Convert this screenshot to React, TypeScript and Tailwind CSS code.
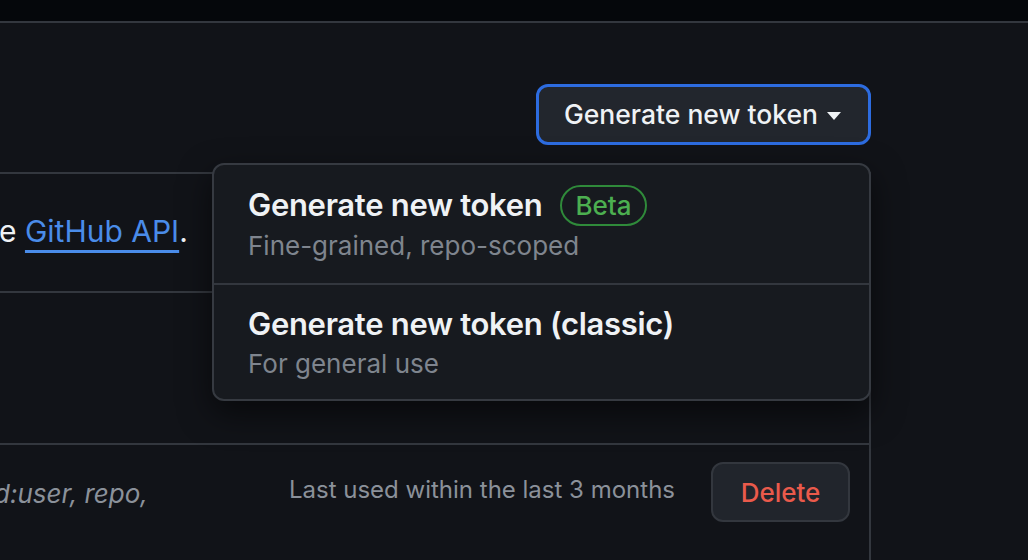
import React from 'react';

const Caret: React.FC = () => (
  <svg width="16" height="8" viewBox="0 0 16 8" className="ml-[8px] mt-[2px]">
    <path d="M1 0h14L8 8z" fill="#f0f3f6" />
  </svg>
);

const App: React.FC = () => {
  return (
    <div
      className="w-[1028px] h-[560px] overflow-hidden bg-[#111318] text-[#eff2f5]"
      style={{ fontFamily: 'Inter, "Noto Sans", sans-serif' }}
    >
      {/* Top bar */}
      <div className="h-[23px] bg-[#05070b] border-b-2 border-[#33373e]" />

      <div className="relative pr-[157px]">
        {/* Header with action button */}
        <div className="flex justify-end pt-[61px] pb-[27px]">
          <button className="flex items-center h-[61px] pl-[25px] pr-[26px] rounded-[12px] border-[3px] border-[#2d6ce0] bg-[#22262d] text-[26.5px] font-medium">
            Generate new token
            <Caret />
          </button>
        </div>

        {/* Token list box */}
        <div className="-ml-[4px] border-t-2 border-r-2 border-[#33373e]">
          <div className="h-[119px] flex items-center border-b-2 border-[#33373e] text-[30px]">
            <span className="ml-[3px] -mt-[2px]">
              e{' '}
              <a className="text-[#4a8ce9] underline decoration-[3px] underline-offset-[8px]">GitHub API</a>.
            </span>
          </div>
          <div className="h-[152px] border-b-2 border-[#33373e]" />
          <div className="h-[120px] flex items-start justify-between pt-[17px] pr-[19px]">
            <span className="mt-[12px] text-[26px] italic text-[#8b919a] -ml-[2px]">d:user, repo,</span>
            <div className="flex items-center gap-[36px]">
              <span className="text-[24px] text-[#8b919a] -mt-[4px]">Last used within the last 3 months</span>
              <button className="h-[60px] w-[139px] rounded-[12px] border-2 border-[#33373e] bg-[#21252c] text-[26px] font-medium text-[#ea5a4b]">
                Delete
              </button>
            </div>
          </div>
        </div>

        {/* Dropdown menu */}
        <div className="absolute top-[140px] right-[157px] w-[659px] rounded-[12px] border-2 border-[#363a41] bg-[#171a1f] shadow-[0_12px_32px_rgba(0,0,0,0.55)]">
          <div className="h-[120px] pl-[34px] pt-[20px] border-b-2 border-[#33373e]">
            <div className="flex items-center h-[40px]">
              <span className="text-[31px] font-semibold tracking-[-0.3px] leading-[40px]">Generate new token</span>
              <span className="ml-[18px] h-[41px] px-[13px] flex items-center rounded-full border-2 border-[#2f8a3a] text-[26px] font-medium text-[#4caf50]">
                Beta
              </span>
            </div>
            <div className="mt-[4px] text-[26px] leading-[34px] text-[#7f858e]">Fine-grained, repo-scoped</div>
          </div>
          <div className="h-[114px] pl-[34px] pt-[19px]">
            <div className="text-[31px] font-semibold tracking-[-0.3px] leading-[40px]">Generate new token (classic)</div>
            <div className="mt-[3px] text-[26px] leading-[34px] text-[#7f858e]">For general use</div>
          </div>
        </div>
      </div>
    </div>
  );
};

export default App;
